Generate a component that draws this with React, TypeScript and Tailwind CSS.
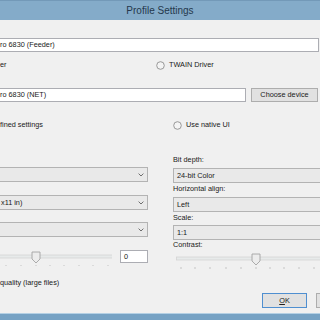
import React from "react";

const Radio = () => (
  <svg width="9" height="9" viewBox="0 0 9 9" className="shrink-0">
    <circle cx="4.5" cy="4.5" r="3.8" fill="#f4f4f4" stroke="#8e8e8e" strokeWidth="0.9" />
  </svg>
);

const Chevron = () => (
  <svg width="6" height="4" viewBox="0 0 6 4" className="shrink-0">
    <polyline points="0.6,0.6 3,3 5.4,0.6" fill="none" stroke="#606060" strokeWidth="0.9" />
  </svg>
);

type SliderProps = { width: number; height: number; trackY: number; trackX: number; thumb: number; ticks: number[] };

const Slider = ({ width, height, trackY, trackX, thumb, ticks }: SliderProps) => (
  <svg width={width} height={height} viewBox={`0 0 ${width} ${height}`} className="shrink-0 block">
    <rect x={trackX + 0.5} y={trackY - 1} width={width - trackX} height="3" fill="#e7eaea" stroke="#d4d4d4" strokeWidth="0.8" />
    {ticks.map((t) => (
      <rect key={t} x={t - 0.5} y={trackY + 9} width="1" height="2" fill="#c4c4c4" />
    ))}
    <path
      d={`M${thumb - 4},${trackY - 4} H${thumb + 4} V${trackY + 3} L${thumb},${trackY + 7} L${thumb - 4},${trackY + 3} Z`}
      fill="#ececec"
      stroke="#a3a3a3"
      strokeWidth="0.9"
    />
  </svg>
);

const Dropdown = ({ text, chevron }: { text: string; chevron?: boolean }) => (
  <div className="h-[15px] shrink-0 flex items-center justify-between border border-[#b3b3b3] border-l-0 bg-[#e9e9e9] pl-[1px] pr-[3px]">
    <span className="leading-none">{text}</span>
    {chevron ? <Chevron /> : null}
  </div>
);

const RDropdown = ({ text }: { text: string }) => (
  <div className="h-[15px] w-[170px] shrink-0 flex items-center border border-[#b3b3b3] bg-[#e9e9e9] pl-[3px]">
    <span className="leading-none">{text}</span>
  </div>
);

export default function App() {
  return (
    <div className="w-[320px] h-[320px] overflow-hidden bg-[#f0f0f0] flex flex-col font-['Liberation_Sans',Arial,sans-serif] text-[7.3px] text-[#202020]">
      <div className="h-[20px] shrink-0 bg-[#84abc9] border-t border-[#7399b8] flex items-center justify-center">
        <span className="text-[10px] text-[#24384c] leading-none">Profile Settings</span>
      </div>

      <div className="flex-1 flex flex-col pb-[5px]">
        <div className="mt-[18px] h-[14px] w-[319px] shrink-0 bg-white border border-[#acadb3] border-l-0 flex items-center">
          <span className="leading-none">ro 6830 (Feeder)</span>
        </div>

        <div className="mt-[8px] h-[10px] flex items-center shrink-0">
          <span className="w-[156px] leading-none">er</span>
          <Radio />
          <span className="ml-[4px] leading-none">TWAIN Driver</span>
        </div>

        <div className="mt-[18px] h-[14px] flex shrink-0">
          <div className="w-[246px] bg-white border border-[#acadb3] border-l-0 flex items-center">
            <span className="leading-none">ro 6830 (NET)</span>
          </div>
          <button className="ml-[5px] w-[67px] bg-[#e1e1e1] border border-[#adadad] flex items-center justify-center leading-none">
            Choose device
          </button>
        </div>

        <div className="mt-[18px] h-[10px] flex items-center shrink-0">
          <span className="w-[173px] leading-none">fined settings</span>
          <Radio />
          <span className="ml-[4px] leading-none">Use native UI</span>
        </div>

        <div className="mt-[25px] flex shrink-0">
          <div className="w-[148px] shrink-0 flex flex-col">
            <div className="h-[12px]" />
            <Dropdown text="" chevron />
            <div className="h-[13px]" />
            <Dropdown text="x11 in)" chevron />
            <div className="h-[12px]" />
            <Dropdown text="" chevron />
            <div className="mt-[13px] flex items-start">
              <Slider width={112} height={16} trackY={6} trackX={-1} thumb={36} ticks={[6, 21, 36, 50, 64, 79, 93, 108]} />
              <div className="ml-[8px] w-[28px] h-[13px] bg-white border border-[#acadb3] flex items-center pl-[3px]">
                <span className="leading-none">0</span>
              </div>
            </div>
            <div className="mt-[12px] h-[10px] flex items-center">
              <span className="leading-none">quality (large files)</span>
            </div>
          </div>

          <div className="ml-[25px] shrink-0 flex flex-col">
            <div className="h-[10px] flex items-center leading-none">Bit depth:</div>
            <div className="mt-[3px]">
              <RDropdown text="24-bit Color" />
            </div>
            <div className="mt-[1px] h-[10px] flex items-center leading-none">Horizontal align:</div>
            <div className="mt-[3px]">
              <RDropdown text="Left" />
            </div>
            <div className="mt-[1px] h-[10px] flex items-center leading-none">Scale:</div>
            <div className="mt-[2px]">
              <RDropdown text="1:1" />
            </div>
            <div className="mt-[0px] h-[10px] flex items-center leading-none">Contrast:</div>
            <Slider width={160} height={20} trackY={8} trackX={3} thumb={83} ticks={[8, 22, 37, 53, 68, 83, 97, 111, 126, 141]} />
          </div>
        </div>

        <div className="mt-auto flex shrink-0 pl-[262px] gap-[9px]">
          <button className="w-[45px] h-[15px] shrink-0 bg-[#e1e1e1] border border-[#4f8fd0] flex items-center justify-center leading-none">
            <span><span className="underline">O</span>K</span>
          </button>
          <div className="w-[45px] h-[15px] shrink-0 bg-[#e1e1e1] border border-[#adadad]" />
        </div>
      </div>

      <div className="h-[7px] shrink-0 bg-[#76a2c4] border-t border-[#b4d0e4]" />
    </div>
  );
}
